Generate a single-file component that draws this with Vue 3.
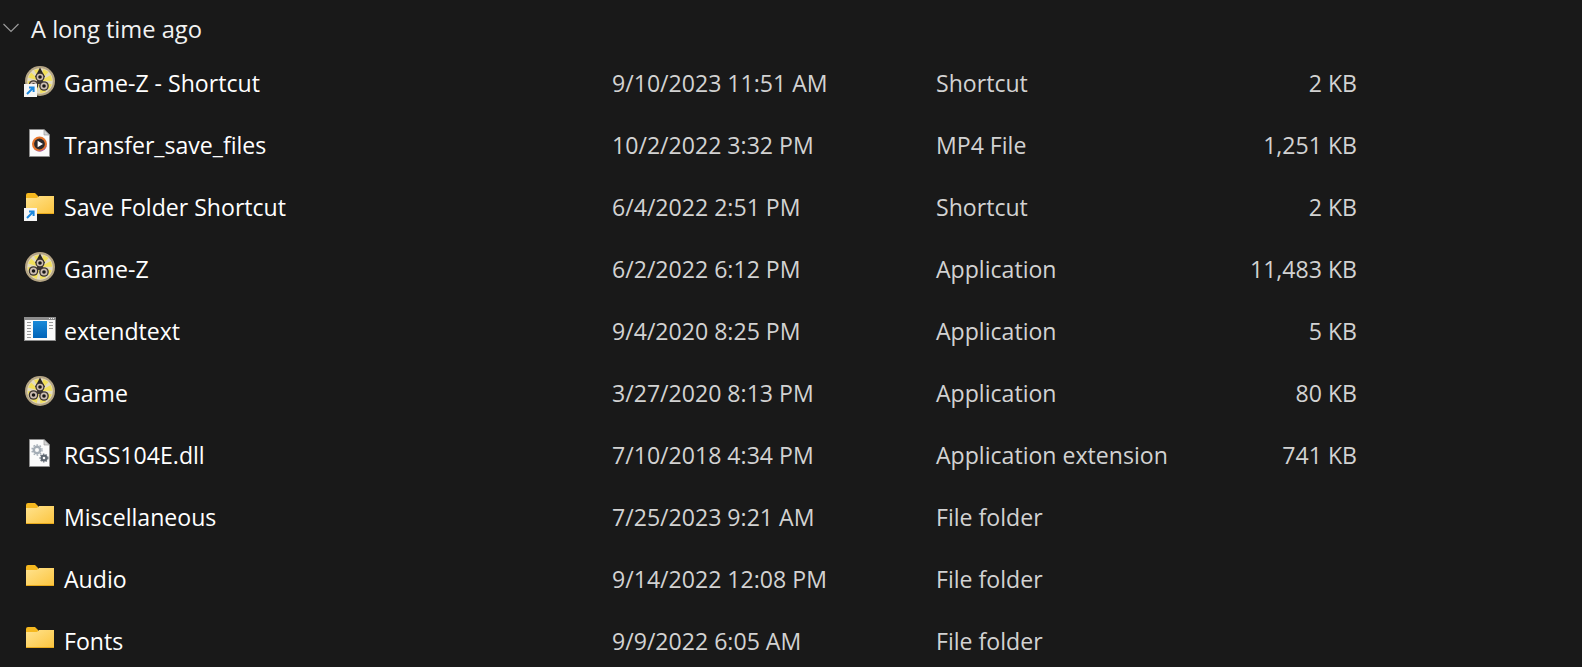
<script setup>
const rows = [
  { name: "Game-Z - Shortcut", date: "9/10/2023 11:51 AM", type: "Shortcut", size: "2 KB", icon: "game", link: true },
  { name: "Transfer_save_files", date: "10/2/2022 3:32 PM", type: "MP4 File", size: "1,251 KB", icon: "video" },
  { name: "Save Folder Shortcut", date: "6/4/2022 2:51 PM", type: "Shortcut", size: "2 KB", icon: "folder", link: true },
  { name: "Game-Z", date: "6/2/2022 6:12 PM", type: "Application", size: "11,483 KB", icon: "game" },
  { name: "extendtext", date: "9/4/2020 8:25 PM", type: "Application", size: "5 KB", icon: "app" },
  { name: "Game", date: "3/27/2020 8:13 PM", type: "Application", size: "80 KB", icon: "game" },
  { name: "RGSS104E.dll", date: "7/10/2018 4:34 PM", type: "Application extension", size: "741 KB", icon: "dll" },
  { name: "Miscellaneous", date: "7/25/2023 9:21 AM", type: "File folder", size: "", icon: "folder" },
  { name: "Audio", date: "9/14/2022 12:08 PM", type: "File folder", size: "", icon: "folder" },
  { name: "Fonts", date: "9/9/2022 6:05 AM", type: "File folder", size: "", icon: "folder" },
];

const wedges = [30, 75, 120, 165, 210, 255, 300, 345];
const gears = [
  { cx: 16, cy: 12, r: 4.6 },
  { cx: 9.5, cy: 20, r: 4.8 },
  { cx: 20, cy: 21, r: 4.8 },
];
</script>

<template>
  <div class="explorer">
    <div class="group-header">
      <svg class="chevron" width="16" height="10" viewBox="0 0 16 10" fill="none">
        <path d="M0.5 1 L8 8.5 L15.5 1" stroke="#9a9a9a" stroke-width="1.2" />
      </svg>
      <span>A long time ago</span>
    </div>

    <div v-for="row in rows" :key="row.name" class="row">
      <div class="icon">
        <svg width="32" height="32" viewBox="0 0 32 32">
          <defs>
            <linearGradient id="folderFill" x1="0" y1="0" x2="1" y2="1">
              <stop offset="0" stop-color="#ffe38f" />
              <stop offset="1" stop-color="#fcc53f" />
            </linearGradient>
            <linearGradient id="appFill" x1="0" y1="0" x2="0" y2="1">
              <stop offset="0" stop-color="#1a8ad8" />
              <stop offset="1" stop-color="#0063b8" />
            </linearGradient>
          </defs>

          <g v-if="row.icon === 'game'">
            <circle cx="16" cy="16" r="15" fill="#b5a585" />
            <circle cx="16" cy="16" r="12.8" fill="#e4dcc2" />
            <path
              v-for="angle in wedges"
              :key="angle"
              d="M16 16 L13 4 L19 4 Z"
              fill="#f2e05c"
              :transform="`rotate(${angle} 16 16)`"
            />
            <path d="M16 2.5 L21 12 L11 12 Z" fill="#2a2622" />
            <path d="M11 19 L21 19 L16 12 Z" fill="#3a3430" />
            <g v-for="gear in gears" :key="gear.cx">
              <circle :cx="gear.cx" :cy="gear.cy" :r="gear.r" fill="#3a3230" />
              <circle :cx="gear.cx" :cy="gear.cy" :r="gear.r - 1.3" fill="#cbbcb0" />
              <circle :cx="gear.cx" :cy="gear.cy" r="1.8" fill="#161414" />
            </g>
          </g>

          <g v-else-if="row.icon === 'video'">
            <path d="M5.5 2.5 H20 L25.5 8 V29.5 H5.5 Z" fill="#fbfbfb" stroke="#8e8e8e" />
            <path d="M20 2.5 V8 H25.5 Z" fill="#d4d4d4" stroke="#8e8e8e" stroke-width="0.6" />
            <circle cx="15.5" cy="17" r="7.5" fill="#e5752b" />
            <path d="M10 22 A7.5 7.5 0 0 0 23 17 A8 8 0 0 1 10 22 Z" fill="#9c5ac8" />
            <circle cx="15.5" cy="17" r="5.4" fill="#2d2a2c" />
            <path d="M13.6 13.8 L19 17 L13.6 20.2 Z" fill="#fff" />
          </g>

          <g v-else-if="row.icon === 'folder'">
            <path d="M2 6 Q2 4 4 4 H11 L14 7 V10 H2 Z" fill="#f5b81f" />
            <path d="M2 9 L13 9 L15 7 H30 V24.5 H2 Z" fill="url(#folderFill)" />
            <path d="M2 24 H30 V25 H2 Z" fill="#e8a91c" />
          </g>

          <g v-else-if="row.icon === 'app'">
            <rect x="0.5" y="4.5" width="31" height="23" fill="#fafafa" stroke="#8c8c8c" />
            <rect x="1" y="5" width="30" height="2" fill="#8c8c8c" />
            <rect x="25" y="5" width="1" height="1" fill="#eee" />
            <rect x="27" y="5" width="1" height="1" fill="#eee" />
            <rect x="29" y="5" width="1" height="1" fill="#eee" />
            <rect x="9" y="8" width="14" height="17" fill="url(#appFill)" />
            <rect
              v-for="y in [9, 12, 15, 18, 21, 24]"
              :key="y"
              x="3"
              :y="y"
              width="4"
              height="1"
              fill="#9a9a9a"
            />
            <rect
              v-for="y in [9, 12, 15]"
              :key="y"
              x="25"
              :y="y"
              width="4"
              height="1"
              fill="#9a9a9a"
            />
          </g>

          <g v-else-if="row.icon === 'dll'">
            <path d="M5.5 2.5 H20 L25.5 8 V29.5 H5.5 Z" fill="#fbfbfb" stroke="#8e8e8e" />
            <path d="M20 2.5 V8 H25.5 Z" fill="#d4d4d4" stroke="#8e8e8e" stroke-width="0.6" />
            <circle cx="13" cy="13" r="3.2" fill="none" stroke="#a4adb6" stroke-width="2.4" />
            <circle cx="13" cy="13" r="5" fill="none" stroke="#a4adb6" stroke-width="1.4" stroke-dasharray="1.6 1.6" />
            <circle cx="20" cy="21" r="2.4" fill="none" stroke="#5d6670" stroke-width="2.2" />
            <circle cx="20" cy="21" r="3.9" fill="none" stroke="#5d6670" stroke-width="1.2" stroke-dasharray="1.4 1.4" />
          </g>

          <g v-if="row.link">
            <rect x="0" y="19" width="13" height="13" fill="#f6f6f6" />
            <path d="M3 29 L9 23 M5 22.5 H9.6 V27" fill="none" stroke="#1b86dc" stroke-width="2" />
          </g>
        </svg>
      </div>
      <span class="name">{{ row.name }}</span>
      <span class="meta">{{ row.date }}</span>
      <span class="meta">{{ row.type }}</span>
      <span class="meta size">{{ row.size }}</span>
    </div>
  </div>
</template>

<style scoped>
.explorer {
  width: 1582px;
  height: 667px;
  overflow: hidden;
  background: #191919;
  font-family: "Open Sans", "Noto Sans", sans-serif;
  font-size: 23.1px;
  color: #fff;
}

.group-header {
  display: flex;
  align-items: center;
  height: 53px;
  padding: 5px 0 0 3px;
  box-sizing: border-box;
  gap: 12px;
  font-size: 23.7px;
  color: #f2f2f2;
}

.chevron {
  flex-shrink: 0;
  margin-bottom: 3px;
}

.row {
  display: grid;
  grid-template-columns: 40px 548px 324px 236px 185px;
  align-items: center;
  height: 62px;
  padding: 0 0 2px 24px;
  box-sizing: border-box;
}

.icon {
  display: flex;
  width: 32px;
  height: 32px;
  margin-bottom: 4px;
}

.name {
  white-space: nowrap;
}

.meta {
  color: #d2d2d2;
  font-size: 23.1px;
  white-space: nowrap;
}

.size {
  text-align: right;
}
</style>

<style>
html,
body {
  background: #191919;
}
</style>
